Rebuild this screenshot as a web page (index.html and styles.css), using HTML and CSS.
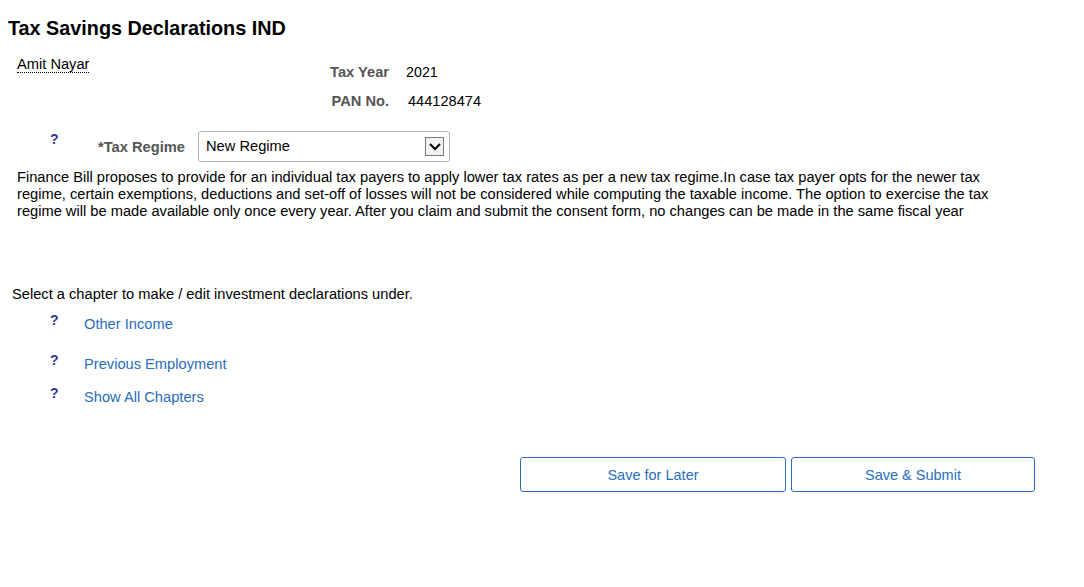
FILE: index.html
```html
<!DOCTYPE html>
<html lang="en">
<head>
    <meta charset="UTF-8">
    <meta name="viewport" content="width=device-width, initial-scale=1.0">
    <title>Tax Savings Declarations IND</title>
    <link rel="stylesheet" href="styles.css">
</head>
<body>
    <div class="page">
        <h1 class="page-title">Tax Savings Declarations IND</h1>

        <div class="info">
            <div class="employee"><span class="emp-name">Amit Nayar</span></div>
            <div class="tax-info">
                <span class="label">Tax Year</span><span class="value">2021</span>
                <span class="label">PAN No.</span><span class="value value-pan">444128474</span>
            </div>
        </div>

        <div class="regime-row">
            <a href="#" class="help">?</a>
            <label class="regime-label" for="regime">*Tax Regime</label>
            <div class="select-box" id="regime">
                <span class="select-text">New Regime</span>
                <span class="drop-btn">
                    <svg width="14" height="10" viewBox="0 0 14 10"><path d="M2 2 L7 7 L12 2" fill="none" stroke="#000" stroke-width="2"/></svg>
                </span>
            </div>
        </div>

        <p class="notice">Finance Bill proposes to provide for an individual tax payers to apply lower tax rates as per a new tax regime.In case tax payer opts for the newer tax regime, certain exemptions, deductions and set-off of losses will not be considered while computing the taxable income. The option to exercise the tax regime will be made available only once every year. After you claim and submit the consent form, no changes can be made in the same fiscal year</p>

        <p class="chapter-intro">Select a chapter to make / edit investment declarations under.</p>

        <ul class="chapters">
            <li class="chapter chapter-wide"><a href="#" class="help">?</a><a href="#" class="chapter-link">Other Income</a></li>
            <li class="chapter"><a href="#" class="help">?</a><a href="#" class="chapter-link">Previous Employment</a></li>
            <li class="chapter"><a href="#" class="help">?</a><a href="#" class="chapter-link">Show All Chapters</a></li>
        </ul>

        <div class="actions">
            <button class="btn btn-later">Save for Later</button>
            <button class="btn btn-submit">Save &amp; Submit</button>
        </div>
    </div>
</body>
</html>
```

FILE: styles.css
```css
* {
    margin: 0;
    padding: 0;
    box-sizing: border-box;
}

body {
    font-family: Arial, "Liberation Sans", sans-serif;
    font-size: 11pt;
    color: #000;
    background-color: #fff;
}

.page {
    padding: 0 8px;
}

.page-title {
    margin-top: 17px;
    font-size: 19.8px;
    line-height: 23px;
    font-weight: bold;
}

/* cabecera: empleado + datos fiscales */
.info {
    display: flex;
    margin-top: 16px;
}

.employee {
    width: 299px;
    padding-left: 9px;
    line-height: 17px;
}

.emp-name {
    border-bottom: 1px dotted #000;
}

.tax-info {
    display: grid;
    grid-template-columns: 82px auto;
    column-gap: 17px;
    row-gap: 12px;
    margin-top: 8px;
    line-height: 17px;
}

.label {
    text-align: right;
    font-weight: bold;
    color: #555;
}

.value {
    font-size: 14.3px;
}

.value-pan {
    padding-left: 2px;
    font-size: 14.6px;
}

/* fila de regimen */
.regime-row {
    display: flex;
    align-items: center;
    margin-top: 21px;
}

.help {
    align-self: flex-start;
    width: 48px;
    margin-left: 42px;
    line-height: 17px;
    font-size: 14px;
    font-weight: bold;
    color: #333399;
    text-decoration: none;
}

.regime-label {
    width: 100px;
    font-weight: bold;
    color: #555;
}

.select-box {
    display: flex;
    align-items: center;
    justify-content: space-between;
    width: 252px;
    height: 31px;
    padding: 0 5px 0 7px;
    border: 1px solid #b3b3b3;
    border-radius: 3px;
}

.select-text {
    margin-top: -1px;
}

.drop-btn {
    display: flex;
    align-items: center;
    justify-content: center;
    width: 19px;
    height: 19px;
    border: 1px solid #7a7a7a;
    background-color: #f2f2f2;
}

.notice {
    margin-top: 7px;
    padding-left: 9px;
    max-width: 1000px;
    line-height: 17px;
}

.chapter-intro {
    margin-top: 66px;
    padding-left: 4px;
    line-height: 17px;
}

/* lista de capitulos */
.chapters {
    list-style: none;
    margin-top: 13px;
}

.chapter {
    display: flex;
    align-items: flex-start;
    line-height: 17px;
    margin-bottom: 16px;
}

.chapter-wide {
    margin-bottom: 23px;
}

.chapter .help {
    width: 34px;
    margin-top: -4px;
}

.chapter-link {
    color: #2a6ebb;
    text-decoration: none;
}

/* botones */
.actions {
    display: flex;
    gap: 5px;
    margin-top: 51px;
    padding-left: 512px;
}

.btn {
    height: 35px;
    font-family: inherit;
    font-size: 14.5px;
    color: #2a6ebb;
    background-color: #fff;
    border: 1px solid #2a6ebb;
    border-radius: 3px;
    cursor: pointer;
}

.btn-later {
    width: 266px;
}

.btn-submit {
    width: 244px;
}
```
